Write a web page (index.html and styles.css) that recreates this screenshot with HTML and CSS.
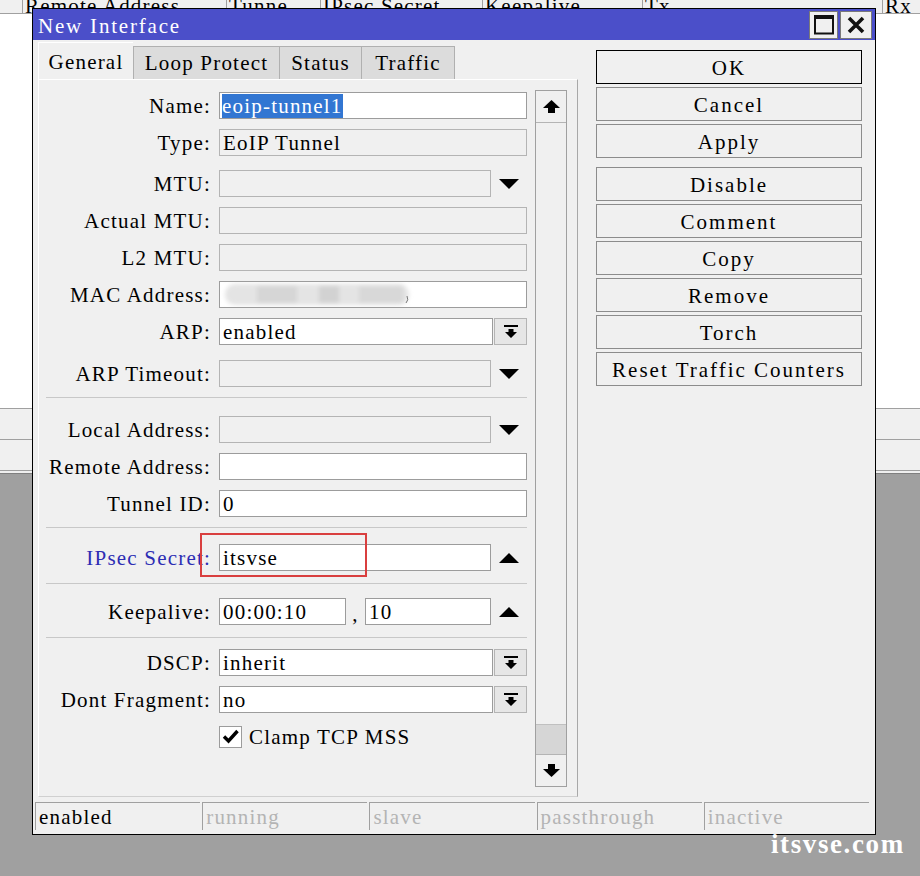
FILE: index.html
```html
<!DOCTYPE html>
<html lang="en">
<head>
    <meta charset="UTF-8">
    <meta name="viewport" content="width=device-width, initial-scale=1.0">
    <title>New Interface</title>
    <link rel="stylesheet" href="styles.css">
</head>
<body>
    <!-- interface list behind the dialog -->
    <div class="desk">
        <div class="bg-head">
            <div class="bg-col w0"></div>
            <div class="bg-col w1">Remote Address</div>
            <div class="bg-col w2">Tunne</div>
            <div class="bg-col w3">IPsec Secret</div>
            <div class="bg-col w4">Keepalive</div>
            <div class="bg-col w5">Tx</div>
            <div class="bg-col w6">Rx</div>
        </div>
        <div class="bg-list"></div>
        <div class="bg-bar"></div>
        <div class="bg-bar"></div>
        <div class="bg-foot"></div>
    </div>

    <div class="dialog">
        <div class="titlebar">
            <span class="title">New Interface</span>
            <div class="tb-btns">
                <div class="tb-btn">
                    <svg width="22" height="22" viewBox="0 0 22 22"><rect x="2" y="2.5" width="18" height="17" fill="none" stroke="#111" stroke-width="2"/><rect x="1" y="1" width="20" height="4" fill="#111"/></svg>
                </div>
                <div class="tb-btn close">
                    <svg width="18" height="18" viewBox="0 0 18 18"><path d="M2 2L16 16M16 2L2 16" stroke="#111" stroke-width="3.6"/></svg>
                </div>
            </div>
        </div>

        <div class="body">
            <div class="left">
                <div class="tabs">
                    <div class="tab active">General</div>
                    <div class="tab t-loop">Loop Protect</div>
                    <div class="tab t-status">Status</div>
                    <div class="tab t-traffic">Traffic</div>
                </div>
                <div class="panel">
                    <div class="form">
                        <div class="sec">
                            <div class="row">
                                <div class="lbl">Name:</div>
                                <div class="fld full name"><span class="sel">eoip-tunnel1</span></div>
                            </div>
                            <div class="row">
                                <div class="lbl">Type:</div>
                                <div class="fld full ro">EoIP Tunnel</div>
                            </div>
                            <div class="row gap4">
                                <div class="lbl">MTU:</div>
                                <div class="fld short ro"></div>
                                <div class="arrow"><svg width="20" height="10" viewBox="0 0 20 10"><path d="M0 0H20L10 10Z"/></svg></div>
                            </div>
                            <div class="row">
                                <div class="lbl">Actual MTU:</div>
                                <div class="fld full ro"></div>
                            </div>
                            <div class="row">
                                <div class="lbl">L2 MTU:</div>
                                <div class="fld full ro"></div>
                            </div>
                            <div class="row">
                                <div class="lbl">MAC Address:</div>
                                <div class="fld full mac">
                                    <svg width="200" height="25" viewBox="0 0 200 25">
                                        <defs><filter id="blur"><feGaussianBlur stdDeviation="2.2"/></filter></defs>
                                        <g filter="url(#blur)">
                                            <rect x="4" y="2" width="184" height="21" rx="10" fill="#e4e4e4"/>
                                            <rect x="36" y="4" width="40" height="17" fill="#d6d6d6"/>
                                            <rect x="98" y="4" width="20" height="17" fill="#d2d2d2"/>
                                            <rect x="138" y="4" width="44" height="17" fill="#d8d8d8"/>
                                        </g>
                                        <path d="M186 14Q188 18 185 21" stroke="#777" stroke-width="1" fill="none"/>
                                    </svg>
                                </div>
                            </div>
                            <div class="row">
                                <div class="lbl">ARP:</div>
                                <div class="fld combo">enabled</div>
                                <div class="dbtn"><svg width="14" height="14" viewBox="0 0 14 14"><path d="M0 0H14V2H0ZM4.5 4H9.5V7H13L7 13L1 7H4.5Z"/></svg></div>
                            </div>
                            <div class="row gap5">
                                <div class="lbl">ARP Timeout:</div>
                                <div class="fld short ro"></div>
                                <div class="arrow"><svg width="20" height="10" viewBox="0 0 20 10"><path d="M0 0H20L10 10Z"/></svg></div>
                            </div>
                        </div>

                        <div class="sec s2">
                            <div class="row">
                                <div class="lbl">Local Address:</div>
                                <div class="fld short ro"></div>
                                <div class="arrow"><svg width="20" height="10" viewBox="0 0 20 10"><path d="M0 0H20L10 10Z"/></svg></div>
                            </div>
                            <div class="row">
                                <div class="lbl">Remote Address:</div>
                                <div class="fld full"></div>
                            </div>
                            <div class="row">
                                <div class="lbl">Tunnel ID:</div>
                                <div class="fld full">0</div>
                            </div>
                        </div>

                        <div class="sec s3">
                            <div class="row">
                                <div class="lbl blue">IPsec Secret:</div>
                                <div class="fld short">itsvse</div>
                                <div class="arrow"><svg width="20" height="10" viewBox="0 0 20 10"><path d="M0 10H20L10 0Z"/></svg></div>
                                <div class="mark-box"></div>
                            </div>
                        </div>

                        <div class="sec s4">
                            <div class="row">
                                <div class="lbl">Keepalive:</div>
                                <div class="fld k1">00:00:10</div>
                                <div class="comma">,</div>
                                <div class="fld k2">10</div>
                                <div class="arrow"><svg width="20" height="10" viewBox="0 0 20 10"><path d="M0 10H20L10 0Z"/></svg></div>
                            </div>
                        </div>

                        <div class="sec s5">
                            <div class="row">
                                <div class="lbl">DSCP:</div>
                                <div class="fld combo">inherit</div>
                                <div class="dbtn"><svg width="14" height="14" viewBox="0 0 14 14"><path d="M0 0H14V2H0ZM4.5 4H9.5V7H13L7 13L1 7H4.5Z"/></svg></div>
                            </div>
                            <div class="row">
                                <div class="lbl">Dont Fragment:</div>
                                <div class="fld combo">no</div>
                                <div class="dbtn"><svg width="14" height="14" viewBox="0 0 14 14"><path d="M0 0H14V2H0ZM4.5 4H9.5V7H13L7 13L1 7H4.5Z"/></svg></div>
                            </div>
                            <div class="row">
                                <div class="check"><svg width="17" height="15" viewBox="0 0 17 15"><path d="M2 7.5L6.5 12L15.5 2" fill="none" stroke="#000" stroke-width="3.4"/></svg></div>
                                <div class="check-lbl">Clamp TCP MSS</div>
                            </div>
                        </div>
                    </div>

                    <div class="scroll">
                        <div class="sb-btn up"><svg width="17" height="13" viewBox="0 0 17 13"><path d="M8.5 0L17 8H12V13H5V8H0Z"/></svg></div>
                        <div class="sb-track"><div class="sb-thumb"></div></div>
                        <div class="sb-btn down"><svg width="17" height="13" viewBox="0 0 17 13"><path d="M5 0H12V5H17L8.5 13L0 5H5Z"/></svg></div>
                    </div>
                </div>
            </div>

            <div class="actions">
                <div class="btn default">OK</div>
                <div class="btn">Cancel</div>
                <div class="btn">Apply</div>
                <div class="btn gap">Disable</div>
                <div class="btn">Comment</div>
                <div class="btn">Copy</div>
                <div class="btn">Remove</div>
                <div class="btn">Torch</div>
                <div class="btn">Reset Traffic Counters</div>
            </div>
        </div>

        <div class="status">
            <div class="seg on">enabled</div>
            <div class="seg">running</div>
            <div class="seg">slave</div>
            <div class="seg">passthrough</div>
            <div class="seg">inactive</div>
        </div>
    </div>

    <div class="watermark">itsvse.com</div>
</body>
</html>
```

FILE: styles.css
```css
body {
    margin: 0;
    width: 920px;
    height: 876px;
    overflow: hidden;
    position: relative;
    background: #a0a0a0;
    font-family: "Liberation Serif", "DejaVu Serif", serif;
    font-size: 21px;
    letter-spacing: 1.2px;
    color: #000;
}

/* background window */
.bg-head {
    display: flex;
    height: 13px;
    line-height: 13px;
    background: #f0f0f0;
    border-bottom: 1px solid #a0a0a0;
    overflow: hidden;
}
.bg-col {
    box-sizing: border-box;
    border-left: 1px solid #a0a0a0;
    padding-left: 2px;
    white-space: nowrap;
    overflow: hidden;
}
.w0 { width: 22px; border-left: none; padding: 0; }
.w1 { width: 204px; }
.w2 { width: 94px; }
.w3 { width: 162px; }
.w4 { width: 160px; }
.w5 { width: 240px; }
.w6 { flex: 1; }
.bg-list {
    height: 394px;
    background: #fff;
}
.bg-bar {
    height: 30px;
    border-top: 1px solid #a0a0a0;
    background: #f0f0f0;
}
.bg-foot {
    height: 2px;
    border-top: 1px solid #a0a0a0;
    border-bottom: 1px solid #808080;
    background: #f0f0f0;
}

/* dialog */
.dialog {
    position: absolute;
    left: 32px;
    top: 8px;
    width: 842px;
    height: 825px;
    border: 1px solid #000;
    background: #f0f0f0;
    display: flex;
    flex-direction: column;
}
.titlebar {
    height: 31px;
    display: flex;
    align-items: center;
    padding-left: 5px;
    background: #4b4fc9;
    color: #fff;
}
.title {
    padding-top: 3px;
    letter-spacing: 1.8px;
}
.tb-btns {
    margin-left: auto;
    display: flex;
    gap: 2px;
    padding-right: 3px;
}
.tb-btn {
    width: 29px;
    height: 28px;
    box-sizing: border-box;
    border: 1px solid #7a7a7a;
    background: #f0f0f0;
    display: flex;
    align-items: center;
    justify-content: center;
}
.tb-btn.close { width: 32px; }

.body {
    height: 762px;
    display: flex;
    padding: 0 13px 0 5px;
}
.left {
    width: 540px;
    display: flex;
    flex-direction: column;
    padding: 2px 0 5px;
}
.tabs {
    display: flex;
    align-items: flex-end;
    height: 37px;
}
.tab {
    height: 33px;
    line-height: 32px;
    box-sizing: border-box;
    background: #dcdcdc;
    border: 1px solid #b0b0b0;
    border-bottom: none;
    text-align: center;
    white-space: nowrap;
}
.tab.active {
    width: 95px;
    height: 37px;
    line-height: 38px;
    background: #f0f0f0;
    border-color: #fff;
    border-right: none;
}
.t-loop { width: 147px; }
.t-status { width: 83px; margin-left: -1px; }
.t-traffic { width: 94px; margin-left: -1px; }

.panel {
    flex: 1;
    display: flex;
    align-items: flex-start;
    padding-top: 12px;
    border: 1px solid;
    border-color: #fff #a8a8a8 #d0d0d0 #fff;
}
.form {
    width: 481px;
    margin-left: 7px;
}
.sec {
    display: flex;
    flex-direction: column;
}
.sec + .sec { border-top: 1px solid #c8c8c8; }
.s2 { padding-top: 18px; }
.s3 { padding: 16px 0 2px; }
.s4 { padding: 14px 0 2px; }
.s5 { padding-top: 11px; }

.row {
    position: relative;
    display: flex;
    align-items: center;
    height: 27px;
    margin-bottom: 10px;
}
.row.gap4 { margin-top: 4px; }
.row.gap5 { margin-top: 5px; }
.lbl {
    width: 165px;
    margin-right: 8px;
    text-align: right;
    white-space: nowrap;
    line-height: 27px;
    padding-top: 2px;
}
.lbl.blue { color: #2d2db4; }

.fld {
    height: 27px;
    box-sizing: border-box;
    border: 1px solid #9c9c9c;
    background: #fff;
    line-height: 26px;
    padding-left: 3px;
    white-space: nowrap;
    overflow: hidden;
}
.fld.ro {
    background: #f0f0f0;
    border-color: #b4b4b4;
}
.full { width: 308px; }
.short { width: 272px; }
.combo { width: 274px; }
.k1 { width: 127px; }
.k2 { width: 126px; }
.fld.name { padding-left: 2px; }
.sel {
    background: #3276d2;
    color: #fff;
}
.fld.mac { padding: 0 0 0 1px; }
.fld.mac svg { display: block; }
.comma {
    width: 19px;
    text-align: center;
    padding-top: 6px;
}
.arrow {
    width: 36px;
    display: flex;
    justify-content: center;
}
.dbtn {
    width: 33px;
    height: 27px;
    margin-left: 1px;
    box-sizing: border-box;
    border: 1px solid #b4b4b4;
    background: #e6e6e6;
    display: flex;
    align-items: center;
    justify-content: center;
}
.check {
    width: 23px;
    height: 22px;
    margin-left: 173px;
    box-sizing: border-box;
    border: 1px solid #9c9c9c;
    background: #fff;
    display: flex;
    align-items: center;
    justify-content: center;
}
.check-lbl {
    margin-left: 7px;
    padding-top: 2px;
}
.mark-box {
    position: absolute;
    left: 154px;
    top: -11px;
    width: 167px;
    height: 44px;
    box-sizing: border-box;
    border: 2px solid #d93f3f;
}

.scroll {
    width: 32px;
    height: 697px;
    margin: -2px 0 0 8px;
    box-sizing: border-box;
    border: 1px solid #a0a0a0;
    display: flex;
    flex-direction: column;
    background: #f0f0f0;
}
.sb-btn {
    height: 31px;
    display: flex;
    align-items: center;
    justify-content: center;
}
.sb-btn.up { border-bottom: 1px solid #b4b4b4; }
.sb-btn.down { border-top: 1px solid #b4b4b4; }
.sb-track {
    flex: 1;
    display: flex;
    flex-direction: column;
    justify-content: flex-end;
}
.sb-thumb {
    height: 29px;
    background: #d6d6d6;
    border-top: 1px solid #c0c0c0;
}

.actions {
    width: 266px;
    margin-left: 18px;
    padding-top: 10px;
    display: flex;
    flex-direction: column;
    gap: 3px;
}
.btn {
    height: 34px;
    box-sizing: border-box;
    border: 1px solid #8c8c8c;
    background: #f0f0f0;
    text-align: center;
    line-height: 34px;
    letter-spacing: 2px;
    white-space: nowrap;
}
.btn.default { border-color: #000; }
.btn.gap { margin-top: 6px; }

.status {
    height: 28px;
    display: grid;
    grid-template-columns: repeat(5, 1fr);
    gap: 2px;
    padding: 0 6px 0 2px;
    margin-bottom: 4px;
}
.seg {
    border-top: 1px solid #a0a0a0;
    border-left: 1px solid #a0a0a0;
    padding-left: 3px;
    line-height: 28px;
    color: #b4b4b4;
    white-space: nowrap;
    overflow: hidden;
}
.seg.on { color: #000; }

.watermark {
    position: absolute;
    left: 771px;
    top: 829px;
    font-family: "Liberation Serif", serif;
    font-weight: bold;
    font-size: 27px;
    letter-spacing: 1.6px;
    color: #fff;
}
```
